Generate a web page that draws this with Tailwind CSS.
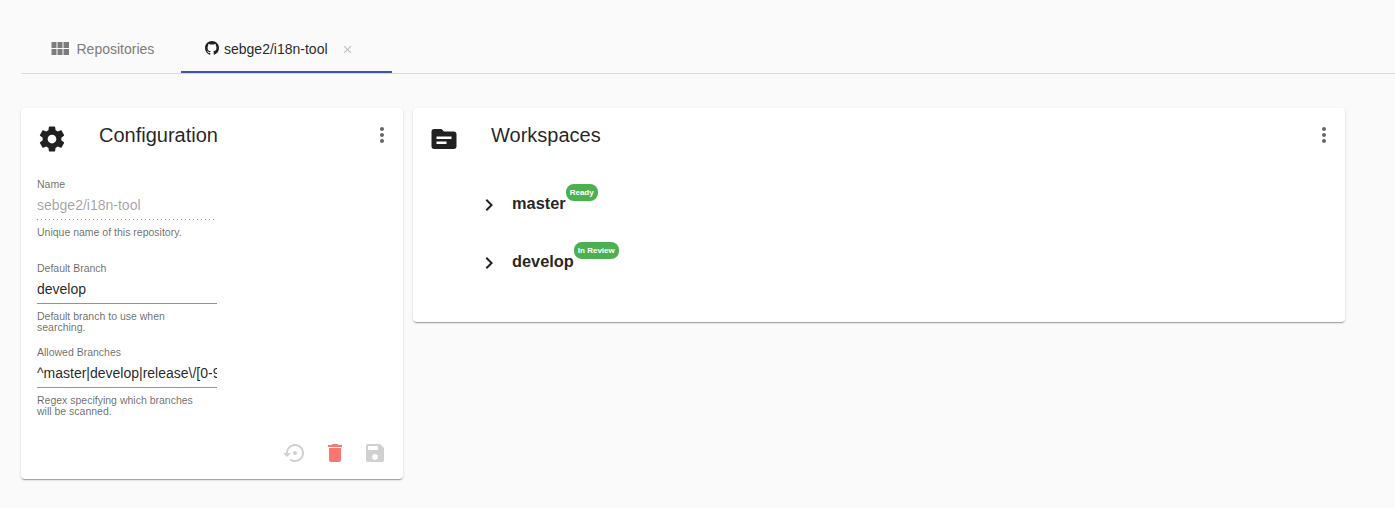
<!DOCTYPE html>
<html lang="en">
<head>
<meta charset="utf-8">
<title>sebge2/i18n-tool</title>
<script src="https://cdn.jsdelivr.net/npm/@tailwindcss/browser@4"></script>
</head>
<body class="h-[508px] overflow-hidden bg-[#fafafa] pl-[21px] pt-6 font-['Liberation_Sans',Arial,sans-serif] text-sm text-black/87">
<nav class="flex h-[50px] border-b border-[#dadada]">
  <div class="flex w-40 items-center pl-[27px] text-[#7c7c7c]">
    <svg class="size-6 shrink-0" viewBox="0 0 24 24" fill="currentColor"><path d="M3.500 11h5V5h-5zM3.500 18h5v-6h-5zM9.500 18h5v-6h-5zM15.500 18H21v-6h-5.500zM9.500 11h5V5h-5zM15.500 5v6H21V5z"/></svg>
    <span class="ml-[4.500px]">Repositories</span>
  </div>
  <div class="flex w-[211px] items-center border-b-2 border-[#3f51b5] pl-6 pt-0.5">
    <svg class="mb-0.5 size-3.5 shrink-0" viewBox="0 0 16 16" fill="currentColor"><path d="M8 0C3.58 0 0 3.58 0 8c0 3.54 2.29 6.53 5.47 7.59.4.07.55-.17.55-.38 0-.19-.01-.82-.01-1.49-2.01.37-2.53-.49-2.69-.94-.09-.23-.48-.94-.82-1.13-.28-.15-.68-.52-.01-.53.63-.01 1.08.58 1.23.82.72 1.21 1.87.87 2.33.66.07-.52.28-.87.51-1.07-1.78-.2-3.64-.89-3.64-3.95 0-.87.31-1.59.82-2.15-.08-.2-.36-1.02.08-2.12 0 0 .67-.21 2.2.82.64-.18 1.32-.27 2-.27s1.36.09 2 .27c1.53-1.04 2.2-.82 2.2-.82.44 1.1.16 1.92.08 2.12.51.56.82 1.27.82 2.15 0 3.07-1.87 3.75-3.65 3.95.29.25.54.73.54 1.48 0 1.07-.01 1.93-.01 2.2 0 .21.15.46.55.38A8.01 8.01 0 0 0 16 8c0-4.42-3.58-8-8-8z"/></svg>
    <span class="ml-[5px]">sebge2/i18n-tool</span>
    <svg class="ml-[13px] mt-0.5 size-[13px] shrink-0 text-[#bdbdbd]" viewBox="0 0 24 24" fill="currentColor"><path d="M19 6.410L17.590 5 12 10.590 6.410 5 5 6.410 10.590 12 5 17.590 6.410 19 12 13.410 17.590 19 19 17.590 13.410 12z"/></svg>
  </div>
</nav>
<main class="mt-[34px] flex items-start gap-2.5">
  <section class="h-[371px] w-[382px] rounded bg-white px-4 pt-4 shadow-[0_2px_1px_-1px_rgba(0,0,0,0.2),0_1px_1px_0_rgba(0,0,0,0.14),0_1px_3px_0_rgba(0,0,0,0.12)]">
    <header class="flex h-[55px] items-start">
      <svg class="size-[30px] shrink-0" viewBox="0 0 24 24" fill="currentColor"><path d="M19.43 12.98c.04-.32.07-.64.07-.98s-.03-.66-.07-.98l2.11-1.65c.19-.15.24-.42.12-.64l-2-3.46c-.12-.22-.39-.3-.61-.22l-2.49 1c-.52-.4-1.08-.73-1.69-.98l-.38-2.65C14.46 2.18 14.25 2 14 2h-4c-.25 0-.46.18-.49.42l-.38 2.65c-.61.25-1.17.59-1.69.98l-2.49-1c-.23-.09-.49 0-.61.22l-2 3.46c-.13.22-.07.49.12.64l2.11 1.65c-.04.32-.07.65-.07.98s.03.66.07.98l-2.11 1.65c-.19.15-.24.42-.12.64l2 3.46c.12.22.39.3.61.22l2.49-1c.52.4 1.08.73 1.69.98l.38 2.65c.03.24.24.42.49.42h4c.25 0 .46-.18.49-.42l.38-2.65c.61-.25 1.17-.59 1.69-.98l2.49 1c.23.09.49 0 .61-.22l2-3.46c.12-.22.07-.49-.12-.64l-2.11-1.65zM12 15.5c-1.93 0-3.5-1.57-3.5-3.5s1.57-3.5 3.5-3.5 3.5 1.57 3.5 3.5-1.57 3.5-3.5 3.5z"/></svg>
      <h2 class="ml-8 mt-[-5px] flex-1 text-xl leading-8">Configuration</h2>
      <svg class="-mr-[7px] -mt-[1px] size-6 text-[#666]" viewBox="0 0 24 24" fill="currentColor"><path d="M12 8c1.1 0 2-.9 2-2s-.9-2-2-2-2 .9-2 2 .9 2 2 2zm0 2c-1.1 0-2 .9-2 2s.9 2 2 2 2-.9 2-2-.9-2-2-2zm0 6c-1.1 0-2 .9-2 2s.9 2 2 2 2-.9 2-2-.9-2-2-2z"/></svg>
    </header>
    <div class="h-[84px] w-[180px]">
      <div class="text-[10.5px] leading-[11px] text-black/60">Name</div>
      <div class="mt-[6px] h-[23px] leading-[18px] text-black/38">sebge2/i18n-tool</div>
      <div class="h-px bg-[linear-gradient(to_right,rgba(0,0,0,0.42)_0,rgba(0,0,0,0.42)_33%,transparent_0)] bg-[length:4px_100%] bg-repeat-x"></div>
      <div class="mt-[7px] text-[10.5px] leading-[11px] text-black/60">Unique name of this repository.</div>
    </div>
    <div class="h-[84px] w-[180px]">
      <div class="text-[10.5px] leading-[11px] text-black/60">Default Branch</div>
      <div class="mt-[6px] h-[23px] leading-[18px]">develop</div>
      <div class="h-px bg-[#949494]"></div>
      <div class="mt-[7px] text-[10.5px] leading-[11px] text-black/60">Default branch to use when<br>searching.</div>
    </div>
    <div class="h-[84px] w-[180px]">
      <div class="text-[10.5px] leading-[11px] text-black/60">Allowed Branches</div>
      <div class="mt-[6px] h-[23px] overflow-hidden whitespace-nowrap leading-[18px]">^master|develop|release\/[0-9</div>
      <div class="h-px bg-[#949494]"></div>
      <div class="mt-[7px] text-[10.5px] leading-[11px] text-black/60">Regex specifying which branches<br>will be scanned.</div>
    </div>
    <div class="mt-[10px] flex justify-end gap-4 text-[#d0d0d0]">
      <svg class="size-6" viewBox="0 0 24 24" fill="currentColor"><path d="M14 12c0-1.1-.9-2-2-2s-2 .9-2 2 .9 2 2 2 2-.9 2-2zm-2-9c-4.97 0-9 4.03-9 9H0l4 4 4-4H5c0-3.87 3.13-7 7-7s7 3.13 7 7-3.13 7-7 7c-1.51 0-2.91-.49-4.06-1.3l-1.42 1.44C8.04 20.3 9.94 21 12 21c4.97 0 9-4.03 9-9s-4.03-9-9-9z"/></svg>
      <svg class="size-6 text-[#f9776e]" viewBox="0 0 24 24" fill="currentColor"><path d="M6 19c0 1.1.9 2 2 2h8c1.1 0 2-.9 2-2V7H6v12zM19 4h-3.500l-1-1h-5l-1 1H5v2h14V4z"/></svg>
      <svg class="size-6" viewBox="0 0 24 24" fill="currentColor"><path d="M17 3H5c-1.110 0-2 .9-2 2v14c0 1.100.89 2 2 2h14c1.100 0 2-.9 2-2V7l-4-4zm-5 16c-1.660 0-3-1.340-3-3s1.340-3 3-3 3 1.340 3 3-1.340 3-3 3zm3-10H5V5h10v4z"/></svg>
    </div>
  </section>
  <section class="h-[214px] w-[932px] rounded bg-white px-4 pt-4 shadow-[0_2px_1px_-1px_rgba(0,0,0,0.2),0_1px_1px_0_rgba(0,0,0,0.14),0_1px_3px_0_rgba(0,0,0,0.12)]">
    <header class="flex h-[52px] items-start">
      <svg class="size-[30px] shrink-0" viewBox="0 0 24 24" fill="currentColor"><path d="M20 6h-8l-2-2H4c-1.100 0-1.990.9-1.990 2L2 18c0 1.100.9 2 2 2h16c1.100 0 2-.9 2-2V8c0-1.100-.9-2-2-2zm-6 10H6v-2h8v2zm4-4H6v-2h12v2z"/></svg>
      <h2 class="ml-8 mt-[-5px] flex-1 text-xl leading-8">Workspaces</h2>
      <svg class="-mr-[7px] -mt-[1px] size-6 text-[#666]" viewBox="0 0 24 24" fill="currentColor"><path d="M12 8c1.1 0 2-.9 2-2s-.9-2-2-2-2 .9-2 2 .9 2 2 2zm0 2c-1.1 0-2 .9-2 2s.9 2 2 2 2-.9 2-2-.9-2-2-2zm0 6c-1.1 0-2 .9-2 2s.9 2 2 2 2-.9 2-2-.9-2-2-2z"/></svg>
    </header>
    <div class="flex h-[58px] items-start pl-12">
      <svg class="mt-[17px] size-6" viewBox="0 0 24 24" fill="currentColor"><path d="M10 6L8.590 7.410 13.170 12l-4.580 4.590L10 18l6-6z"/></svg>
      <h3 class="ml-[11px] mt-[17px] text-[16.38px] font-bold leading-5">master</h3>
      <span class="mt-2 h-[17px] rounded-[8px] bg-[#4caf50] px-1 text-[8px] font-bold leading-[17px] text-white">Ready</span>
    </div>
    <div class="flex h-[58px] items-start pl-12">
      <svg class="mt-[17px] size-6" viewBox="0 0 24 24" fill="currentColor"><path d="M10 6L8.590 7.410 13.170 12l-4.580 4.590L10 18l6-6z"/></svg>
      <h3 class="ml-[11px] mt-[17px] text-[16.38px] font-bold leading-5">develop</h3>
      <span class="mt-2 h-[17px] rounded-[8px] bg-[#4caf50] px-1 text-[8px] font-bold leading-[17px] text-white">In Review</span>
    </div>
  </section>
</main>
</body>
</html>
